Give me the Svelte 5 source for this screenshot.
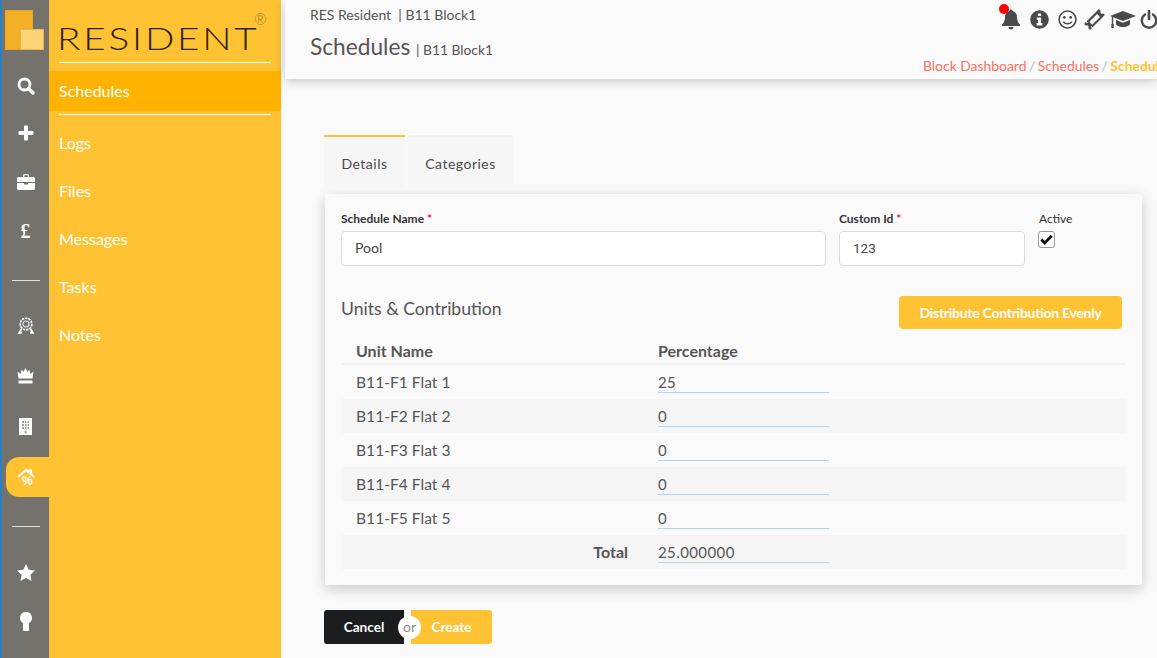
<script>
  const menu = ['Logs', 'Files', 'Messages', 'Tasks', 'Notes'];
  const units = [
    { name: 'B11-F1 Flat 1', pct: '25' },
    { name: 'B11-F2 Flat 2', pct: '0' },
    { name: 'B11-F3 Flat 3', pct: '0' },
    { name: 'B11-F4 Flat 4', pct: '0' },
    { name: 'B11-F5 Flat 5', pct: '0' },
  ];
</script>

<div class="page">
  <nav class="rail">
    <div class="mark"><span class="back"></span><span class="front"></span></div>
    <div class="ri">
      <svg width="18" height="18" viewBox="0 0 18 18"><circle cx="7.5" cy="7.5" r="5.5" fill="none" stroke="#fff" stroke-width="2.8"/><path d="M11.5 11.5 16 16" stroke="#fff" stroke-width="3.4" stroke-linecap="round"/></svg>
    </div>
    <div class="ri plus">
      <svg width="16" height="16" viewBox="0 0 16 16"><path d="M6 1.500a1 1 0 0 1 1-1h2a1 1 0 0 1 1 1V6h4.500a1 1 0 0 1 1 1v2a1 1 0 0 1-1 1H10v4.500a1 1 0 0 1-1 1H7a1 1 0 0 1-1-1V10H1.500a1 1 0 0 1-1-1V7a1 1 0 0 1 1-1H6z" fill="#fff"/></svg>
    </div>
    <div class="ri">
      <svg width="18" height="16" viewBox="0 0 18 16"><path d="M6 3V1.500C6 .7 6.700 0 7.500 0h3c.8 0 1.500.7 1.500 1.500V3h4.500c.8 0 1.500.7 1.500 1.500V8H0V4.500C0 3.700.7 3 1.500 3zm1.300 0h3.400V1.300H7.300zM0 9h7v1.500h4V9h7v5.500c0 .8-.7 1.500-1.500 1.500h-15C.7 16 0 15.300 0 14.500z" fill="#fff"/></svg>
    </div>
    <div class="ri pound">£</div>
    <div class="rule"><span></span></div>
    <div class="ri tall">
      <svg width="16" height="18" viewBox="0 0 16 18"><circle cx="8" cy="7" r="5.800" fill="none" stroke="#fff" stroke-width="1.600" stroke-dasharray="2.500 .7"/><circle cx="8" cy="7" r="3" fill="none" stroke="#dfe6ee" stroke-width="1.200"/><path d="M3.500 12 1 16l3-.3M12.500 12l2.500 4-3-.3" fill="none" stroke="#fff" stroke-width="1.800"/></svg>
    </div>
    <div class="ri tall">
      <svg width="17" height="16" viewBox="0 0 17 16"><path d="M1.500 10.500 .5 3.500l3 2.500L4.800 1.500 6.500 4 8.500 0l2 4 1.700-2.500L13.500 6l3-2.500-1 7z" fill="#fff"/><rect x="1.500" y="12.500" width="14" height="3" fill="#fff"/></svg>
    </div>
    <div class="ri tall">
      <svg width="13" height="17" viewBox="0 0 13 17"><rect width="13" height="17" fill="#fff"/><path d="M3 3h2v2H3zm3 0h1.500v2H6zm2.500 0H10v2H8.500zM3 6h2v2H3zm3 0h1.500v2H6zm2.500 0H10v2H8.500zM3 9h2v2H3zm3 0h1.500v2H6zm2.500 0H10v2H8.500zM5.500 13h2v2.500h-2z" fill="#a9a7a2"/></svg>
    </div>
    <div class="ri active">
      <svg width="18" height="19" viewBox="0 0 18 19"><path d="M1 9l8-7 2.500 2.200V2.500h2.500v3.800L17 9" fill="none" stroke="#fff" stroke-width="2"/></svg>
      <span class="pc">%</span>
    </div>
    <div class="rule low"><span></span></div>
    <div class="ri tall">
      <svg width="18" height="17" viewBox="0 0 18 17"><path d="M9 0l2.700 5.700 6.300.8-4.600 4.300 1.200 6.200L9 14l-5.600 3 1.200-6.200L0 6.500l6.300-.8z" fill="#fff"/></svg>
    </div>
    <div class="ri">
      <svg width="12" height="19" viewBox="0 0 12 19"><path d="M6 0a6 6 0 0 1 3 11.200V18a1 1 0 0 1-1 1H4a1 1 0 0 1-1-1v-6.800A6 6 0 0 1 6 0z" fill="#fff"/></svg>
    </div>
  </nav>

  <aside class="side">
    <div class="logo"><span class="word">RESIDENT</span><span class="reg">®</span></div>
    <div class="current"><span>Schedules</span></div>
    <ul>
      {#each menu as m}
        <li>{m}</li>
      {/each}
    </ul>
  </aside>

  <main class="main">
    <header class="top">
      <div class="titles">
        <div class="crumb">RES Resident &nbsp;|&nbsp;B11 Block1</div>
        <h1>Schedules <small>| B11 Block1</small></h1>
      </div>
      <div class="tools">
        <div class="icons">
          <span class="bell">
            <svg width="20" height="22" viewBox="0 0 20 22"><path d="M10 1.500c.9 0 1.500.6 1.500 1.400 3 .7 4.500 3 4.500 6 0 4 1 5.600 3 7.600v1.500H1v-1.500c2-2 3-3.600 3-7.600 0-3 1.500-5.300 4.500-6C8.500 2.100 9.100 1.500 10 1.500zM7.500 19h5a2.500 2.500 0 0 1-5 0z" fill="#4a4a4a"/></svg>
            <i></i>
          </span>
          <svg class="info" width="18" height="18" viewBox="0 0 18 18"><circle cx="9" cy="9" r="8.800" fill="#4a4a4a"/><path d="M7.500 3.200h3v2.600h-3zM6.500 7.200h4v5.200h1.200v2.300H6.300v-2.300h1.300V9.500H6.500z" fill="#fafafa"/></svg>
          <svg class="smile" width="18" height="18" viewBox="0 0 18 18"><circle cx="9" cy="9" r="8" fill="none" stroke="#4a4a4a" stroke-width="1.500"/><circle cx="6" cy="7" r="1.300" fill="#4a4a4a"/><circle cx="12" cy="7" r="1.300" fill="#4a4a4a"/><path d="M5 11c1.800 2.800 6.200 2.800 8 0" fill="none" stroke="#4a4a4a" stroke-width="1.500"/></svg>
          <svg class="ticket" width="20" height="20" viewBox="0 0 20 20"><g transform="rotate(-45 10 10)"><path d="M0 6h2.500v1.500h1V6H20v2.500a1.500 1.500 0 0 0 0 3V14H3.500v-1.500h-1V14H0v-2.500a1.500 1.500 0 0 0 0-3z" fill="#4a4a4a"/><rect x="5" y="8" width="10.500" height="4" fill="#fafafa"/></g></svg>
          <svg class="cap" width="26" height="20" viewBox="0 0 26 20"><path d="M13 2 26 7l-13 5L0 7z" fill="#4a4a4a"/><path d="M6 11l7 2.700L20 11v4.500c-2 2-5 2.500-7 2.500s-5-.5-7-2.500z" fill="#4a4a4a"/><path d="M2.500 8v7" stroke="#4a4a4a" stroke-width="1.400"/><rect x="1.300" y="15" width="2.400" height="4" fill="#4a4a4a"/></svg>
          <svg width="18" height="19" viewBox="0 0 18 19"><path d="M5 4.500a7.200 7.200 0 1 0 8 0" fill="none" stroke="#4a4a4a" stroke-width="2.400" stroke-linecap="round"/><path d="M9 1v8" stroke="#4a4a4a" stroke-width="2.600" stroke-linecap="round"/></svg>
        </div>
        <div class="path">
          <a>Block Dashboard</a><em>/</em><a>Schedules</a><em>/</em><b>Schedule</b>
        </div>
      </div>
    </header>

    <section class="content">
      <div class="tabs">
        <button class="tab on">Details</button>
        <button class="tab">Categories</button>
      </div>

      <div class="card">
        <div class="fields">
          <label class="f-name">
            <span class="lbl">Schedule Name <i>*</i></span>
            <input value="Pool" />
          </label>
          <label class="f-id">
            <span class="lbl">Custom Id <i>*</i></span>
            <input class="roboto" value="123" />
          </label>
          <div class="f-active">
            <span class="lbl plain">Active</span>
            <span class="check">
              <svg width="13" height="11" viewBox="0 0 13 11"><path d="M1.300 5.500 4.800 9 11.700 1.800" fill="none" stroke="#111" stroke-width="2.800"/></svg>
            </span>
          </div>
        </div>

        <div class="units-head">
          <h2>Units &amp; Contribution</h2>
          <button class="even">Distribute Contribution Evenly</button>
        </div>

        <div class="table">
          <div class="row head">
            <div class="c1">Unit Name</div>
            <div class="c2">Percentage</div>
          </div>
          {#each units as u}
            <div class="row">
              <div class="c1">{u.name}</div>
              <div class="c2"><span class="val">{u.pct}</span></div>
            </div>
          {/each}
          <div class="row total">
            <div class="c1">Total</div>
            <div class="c2"><span class="val">25.000000</span></div>
          </div>
        </div>
      </div>

      <div class="actions">
        <button class="cancel">Cancel</button>
        <span class="or">or</span>
        <button class="create">Create</button>
      </div>
    </section>
  </main>
</div>

<style>
  :global(body) { margin: 0; background: #fafafa; }
  .page {
    display: flex;
    width: 1157px;
    height: 658px;
    overflow: hidden;
    font-family: Lato, sans-serif;
    color: #4a4a4a;
    background: #fafafa;
  }
  .rail {
    flex: 0 0 47px;
    border-left: 2px solid #2a7fc4;
    background: #75726d;
    display: flex;
    flex-direction: column;
    align-items: stretch;
  }
  .mark { position: relative; height: 62px; flex: 0 0 auto; }
  .back { position: absolute; left: 3px; top: 10px; width: 28px; height: 40px; background: #f5af24; border: 1px solid #e6a532; box-sizing: border-box; }
  .front { position: absolute; left: 18px; top: 29px; width: 24px; height: 21px; background: #ffd477; box-sizing: border-box; border: 1px solid #e8b458; }
  .ri {
    height: 48px;
    display: flex;
    align-items: center;
    justify-content: center;
    flex: 0 0 auto;
  }
  .ri.tall { height: 50px; }
  .ri.plus { padding-bottom: 2px; box-sizing: border-box; }
  .pound { color: #fff; font: bold 20px "Liberation Serif", serif; padding-top: 3px; box-sizing: border-box; }
  .rule { height: 42px; margin-top: 5px; display: flex; align-items: center; justify-content: center; flex: 0 0 auto; }
  .rule.low { margin-top: 8px; }
  .rule span { width: 28px; height: 1px; background: #e4e2de; }
  .active {
    position: relative;
    height: 40px;
    margin: 6px 0 0 4px;
    border-radius: 13px 0 0 13px;
    background: #ffc233;
    padding-right: 4px;
  }
  .pc { position: absolute; left: 16px; top: 17px; color: #fff; font: bold 12px "Liberation Sans", sans-serif; }
  .side {
    flex: 0 0 232px;
    background: #ffc233;
    color: #fff;
  }
  .logo {
    position: relative;
    height: 62px;
    margin: 0 10px;
    border-bottom: 1px solid #fff;
  }
  .word {
    position: absolute;
    left: -2px;
    top: 26px;
    font: 300 32px/24px Lato, sans-serif;
    letter-spacing: 2.300px;
    color: #2e2209;
    transform: scaleX(1.210);
    transform-origin: left center;
  }
  .reg { position: absolute; left: 195px; top: 13px; font: 300 15px/12px Lato, sans-serif; color: #9a7a30; }
  .current { margin-top: 8px; height: 40px; box-sizing: border-box; padding: 0 0 2px 10px; background: #ffb300; display: flex; align-items: center; font-size: 16px; }
  .current span { color: #fff; }
  .side ul {
    list-style: none;
    margin: 3px 10px 0;
    padding: 4px 0 0;
    border-top: 1px solid #fff;
  }
  .side li { height: 48px; line-height: 48px; font-size: 16px; }
  .main { flex: 1; min-width: 0; padding-left: 4px; }
  .top {
    height: 79px;
    background: #fafafa;
    box-shadow: 0 2px 10px rgba(0, 0, 0, 0.22);
    display: flex;
    justify-content: space-between;
    padding-left: 25px;
    overflow: hidden;
    position: relative;
  }
  .crumb { font-size: 14px; line-height: 17px; margin-top: 6px; color: #555; }
  h1 { margin: 8px 0 0; font-size: 22.700px; font-weight: 400; line-height: 32px; color: #555; }
  h1 small { font-size: 13.800px; font-weight: 400; }
  .tools { display: flex; flex-direction: column; align-items: flex-start; width: 234px; flex: 0 0 auto; white-space: nowrap; }
  .icons { display: flex; align-items: center; height: 20px; margin: 9px 0 0 78px; }
  .bell { position: relative; display: flex; }
  .bell i { position: absolute; left: -2px; top: -4px; width: 10px; height: 10px; border-radius: 50%; background: #f00; }
  .info { width: 19px; height: 19px; margin-left: 9px; }
  .smile { width: 19px; height: 19px; margin-left: 9px; }
  .ticket { width: 21px; height: 21px; margin-left: 7px; }
  .cap { margin-left: 5px; }
  .icons > svg:last-child { margin-left: 4px; }
  .path { margin-top: 28px; font-size: 13.900px; line-height: 17px; color: #ff6f61; }
  .path em { font-style: normal; color: #bbb; margin: 0 2.500px; }
  .path b { color: #ffc233; }
  .content { padding: 56px 0 0 39px; }
  .tabs { display: flex; gap: 3px; height: 59px; }
  .tab {
    height: 55px;
    padding: 0;
    border: 0;
    border-top: 2px solid #f0f0f0;
    background: #f6f6f6;
    font: 14px Lato, sans-serif;
    letter-spacing: 0.500px;
    color: #4a4a4a;
  }
  .tab.on { border-top-color: #ffc233; width: 81px; }
  .tab:last-child { width: 105px; }
  .card {
    width: 817px;
    height: 391px;
    margin-left: 1px;
    box-sizing: border-box;
    padding: 16px 17px 0 16px;
    background: #fafafa;
    border-radius: 2px;
    box-shadow: 0 4px 14px rgba(0, 0, 0, 0.2);
  }
  .fields { display: flex; height: 72px; }
  .f-name { width: 485px; margin-right: 13px; display: block; }
  .f-id { width: 186px; margin-right: 14px; display: block; }
  .lbl { display: block; height: 21px; font-size: 12px; line-height: 17px; font-weight: 700; color: #333; }
  .lbl i { color: #e5173f; font-style: normal; }
  .lbl.plain { font-weight: 400; }
  input {
    display: block;
    width: 100%;
    height: 35px;
    box-sizing: border-box;
    padding: 0 13px 2px;
    border: 1px solid #dcdcdc;
    border-radius: 4px;
    background: #fff;
    font: 14px Lato, sans-serif;
    color: #444;
  }
  .roboto { font-family: Roboto, sans-serif; font-size: 13.500px; }
  .check {
    display: flex;
    align-items: center;
    justify-content: center;
    width: 15px;
    height: 15px;
    margin-left: -1px;
    border: 1px solid #999;
    border-radius: 3px;
    background: #fff;
  }
  .units-head { display: flex; justify-content: space-between; align-items: center; height: 33px; margin-top: 14px; }
  h2 { margin: -8px 0 0; font-size: 17.600px; font-weight: 400; color: #555; }
  .even {
    width: 223px;
    height: 33px;
    margin-right: 3px;
    border: 0;
    border-radius: 4px;
    background: #ffc233;
    color: #fff;
    font: bold 14px Lato, sans-serif;
    letter-spacing: -0.270px;
  }
  .table { width: 784px; margin-top: 5px; }
  .row { display: flex; height: 34px; align-items: center; font-size: 15.600px; color: #555; }
  .row:nth-child(odd):not(.head) { background: #f5f5f5; }
  .row.head { height: 31px; padding-top: 3px; border-bottom: 2px solid #f0f0f0; font-weight: 700; font-size: 16px; box-sizing: border-box; }
  .c1 { width: 302px; padding-left: 15px; box-sizing: border-box; }
  .c2 { padding-left: 15px; }
  .val { display: block; width: 171px; height: 21px; line-height: 22px; border-bottom: 1px solid #b8d4ea; font-size: 15px; letter-spacing: 0.400px; }
  .total .c1 { text-align: right; font-weight: 700; font-size: 16px; padding: 0 15px 2px 0; }
  .actions { position: relative; display: flex; margin-top: 25px; gap: 7px; }
  .actions button { height: 34px; border: 0; color: #fff; font: bold 13.600px Lato, sans-serif; }
  .cancel { width: 80px; background: #1a1c1e; border-radius: 3px 0 0 3px; }
  .create { width: 81px; background: #ffc233; border-radius: 0 3px 3px 0; }
  .or {
    position: absolute;
    left: 74px;
    top: 6px;
    width: 23px;
    height: 23px;
    border-radius: 50%;
    background: #fff;
    color: #888;
    font-size: 14px;
    line-height: 22px;
    text-align: center;
  }
</style>
